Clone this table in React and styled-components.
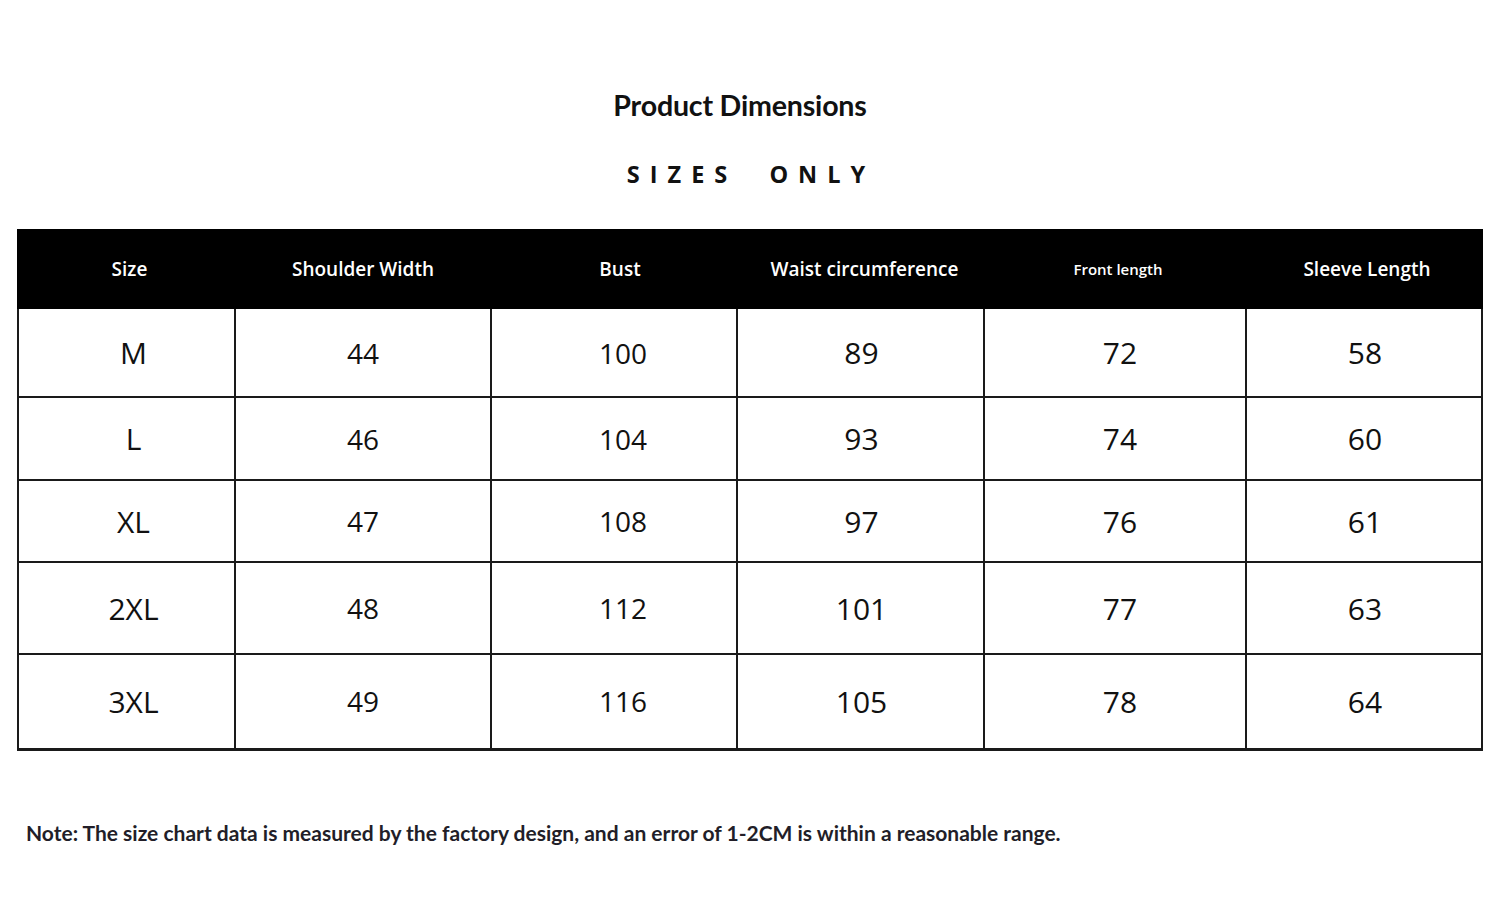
import React from "react";
import styled, { createGlobalStyle } from "styled-components";

const GlobalStyle = createGlobalStyle`
  body {
    margin: 0;
    background: #ffffff;
    font-family: "Open Sans", "Liberation Sans", sans-serif;
  }
`;

const Page = styled.div`
  width: 1500px;
  height: 922px;
  box-sizing: border-box;
  padding: 88px 0 0 17px;
  background: #fff;
`;

const Title = styled.h1`
  margin: 0 0 0 -17px;
  font-family: Lato, "Liberation Sans", sans-serif;
  font-weight: 700;
  font-size: 28.6px;
  line-height: 34px;
  color: #111;
  text-align: center;
  letter-spacing: -0.2px;
  padding-right: 20px;
`;

const Subtitle = styled.h2`
  margin: 38px 0 0 -17px;
  font-family: "Open Sans", "Liberation Sans", sans-serif;
  font-weight: 700;
  font-size: 23.5px;
  line-height: 28px;
  letter-spacing: 10px;
  word-spacing: 16px;
  color: #111;
  text-align: center;
  padding-left: 2px;
`;

const Table = styled.table`
  margin-top: 41px;
  width: 1464px;
  border-collapse: collapse;
  table-layout: fixed;
`;

const HeadCell = styled.th`
  background: #000;
  color: #fff;
  height: 76px;
  padding: 0 0 0 ${(p) => p.indent || 0}px;
  font-weight: 600;
  font-size: ${(p) => p.size || 19}px;
  text-align: center;
  border: 2px solid #000;
`;

const Row = styled.tr`
  height: ${(p) => p.h}px;
  border-bottom: ${(p) => (p.last ? "3px" : "2px")} solid #1a1a1a;
`;

const Cell = styled.td`
  border-left: 2px solid #1a1a1a;
  border-right: 2px solid #1a1a1a;
  padding: 0 0 0 ${(p) => p.indent || 0}px;
  text-align: center;
  font-size: ${(p) => p.size}px;
  color: #111;
`;

const Note = styled.p`
  margin: 69px 0 0 9px;
  font-family: Lato, "Liberation Sans", sans-serif;
  font-weight: 700;
  font-size: 21px;
  color: #221e28;
`;

const columns = [
  { label: "Size", width: 217, size: 30, indent: 14, headIndent: 6 },
  { label: "Shoulder Width", width: 256, size: 28 },
  { label: "Bust", width: 246, size: 28, indent: 18, headIndent: 12 },
  { label: "Waist circumference", width: 247, size: 30, indent: 2, headIndent: 8 },
  { label: "Front length", width: 262, size: 30, head: 15, indent: 10, headIndent: 6 },
  { label: "Sleeve Length", width: 236, size: 30, indent: 2, headIndent: 6 },
];

const rows = [
  { h: 89, v: ["M", "44", "100", "89", "72", "58"] },
  { h: 83, v: ["L", "46", "104", "93", "74", "60"] },
  { h: 82, v: ["XL", "47", "108", "97", "76", "61"] },
  { h: 92, v: ["2XL", "48", "112", "101", "77", "63"] },
  { h: 95, v: ["3XL", "49", "116", "105", "78", "64"] },
];

export default function App() {
  return (
    <>
      <GlobalStyle />
      <Page>
        <Title>Product Dimensions</Title>
        <Subtitle>SIZES ONLY</Subtitle>
        <Table>
          <colgroup>
            {columns.map((c) => (
              <col key={c.label} style={{ width: c.width }} />
            ))}
          </colgroup>
          <thead>
            <tr>
              {columns.map((c) => (
                <HeadCell key={c.label} size={c.head} indent={c.headIndent}>
                  {c.label}
                </HeadCell>
              ))}
            </tr>
          </thead>
          <tbody>
            {rows.map((r, i) => (
              <Row key={r.v[0]} h={r.h} last={i === rows.length - 1}>
                {r.v.map((val, j) => (
                  <Cell key={j} size={columns[j].size} indent={columns[j].indent}>
                    {val}
                  </Cell>
                ))}
              </Row>
            ))}
          </tbody>
        </Table>
        <Note>
          Note: The size chart data is measured by the factory design, and an
          error of 1-2CM is within a reasonable range.
        </Note>
      </Page>
    </>
  );
}
